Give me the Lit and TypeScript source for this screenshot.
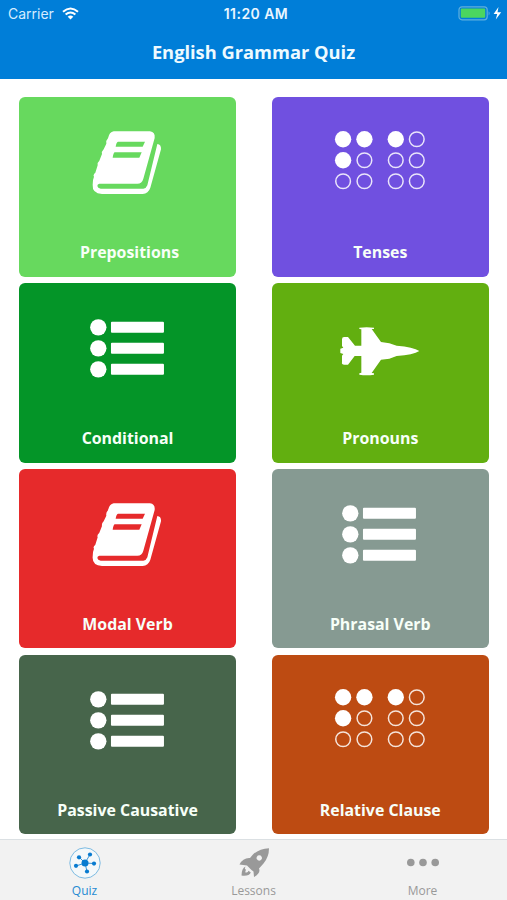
import { LitElement, html, svg, css } from "lit";
import { customElement } from "lit/decorators.js";
import { styleMap } from "lit/directives/style-map.js";

type IconName = "book" | "braille" | "list" | "jet";

const braille = [
  [54, 58, 1], [118, 58, 1], [212, 58, 1], [275, 58, 0],
  [54, 121, 1], [118, 121, 0], [212, 121, 0], [275, 121, 0],
  [54, 184, 0], [118, 184, 0], [212, 184, 0], [275, 184, 0],
];

const icons = {
  book: svg`<g transform="translate(2 5) scale(.33333)">
    <path fill="#fff" fill-rule="evenodd" d="M101 34H210Q226 36 224 54L190 176Q186 191 172 191H58Q52 192 52 198Q53 205 62 206H190Q199 205 202 196L232 72Q244 73 243 88L211 203Q205 221 188 222H66Q36 220 38 194Q38 178 42 170Q38 165 46 158L53 136Q50 129 58 122L66 102Q64 95 71 88L79 71Q77 62 84 55Q88 36 101 34ZM114 65Q109 67 107 80H188L195 65ZM104 97Q100 99 98 113H178L185 97Z"/></g>`,
  braille: svg`<g transform="translate(-4.9 4.9) scale(.33333)">${braille.map(([x, y, on]) =>
    on ? svg`<circle cx=${x} cy=${y} r="24.5" fill="#fff"/>`
       : svg`<circle cx=${x} cy=${y} r="22" fill="none" stroke="#fff" stroke-opacity=".85" stroke-width="4.5"/>`)}</g>`,
  list: svg`<g transform="translate(2.3 8.7) scale(.33333)" fill="#fff">${[53, 116, 179].map((y) =>
    svg`<circle cx="54" cy=${y} r="24.5"/><rect x="92" y=${y - 16.5} width="159" height="33" rx="3"/>`)}</g>`,
  jet: svg`<g transform="translate(0 14) scale(.33333)">
    <path fill="#fff" d="M88 38Q110 35 132 38V42H125L153 81L178 85L200 92Q250 96 268 108Q250 120 200 123L178 131L153 134L125 174L132 175V179Q110 182 88 179V175L94 173V123H74L54 149H43Q34 149 36 141V122L40 117L31 114V101L40 98L36 93V73Q36 65 44 66H54L75 92H94V43L88 42Z"/></g>`,
};

const topics: { name: string; icon: IconName; color: string; shift?: number }[] = [
  { name: "Prepositions", icon: "book", color: "#67d95e", shift: 2 },
  { name: "Tenses", icon: "braille", color: "#7050e0" },
  { name: "Conditional", icon: "list", color: "#049528" },
  { name: "Pronouns", icon: "jet", color: "#62af10" },
  { name: "Modal Verb", icon: "book", color: "#e62a2b" },
  { name: "Phrasal Verb", icon: "list", color: "#869a92" },
  { name: "Passive Causative", icon: "list", color: "#47654b" },
  { name: "Relative Clause", icon: "braille", color: "#bd4b12" },
];

@customElement("app-root")
export class AppRoot extends LitElement {
  static styles = css`
    :host { display: flex; flex-direction: column; height: 900px; background: #fff; font-family: "Open Sans", "Noto Sans", sans-serif; overflow: hidden; }
    * { box-sizing: border-box; }
    svg { display: block; }
    header { height: 79px; flex: none; background: #007ed8; color: #fff; }
    .status { height: 27px; display: grid; grid-template-columns: 1fr auto 1fr; align-items: center; padding: 0 5px 0 8px; font: 14px/27px Inter, sans-serif; }
    .carrier { display: flex; align-items: center; gap: 7px; color: #d5ecff; }
    .carrier svg { margin-left: 1px; }
    .time { font-weight: 600; font-size: 14px; letter-spacing: .45px; color: #eaf6ff; padding-left: 2px; }
    .battery { display: flex; justify-content: flex-end; }
    h1 { margin: 0; font-size: 18.3px; line-height: 50px; font-weight: 700; text-align: center; color: #eefaff; }
    main { flex: 1; padding: 18.3px 18.5px 0 19.3px; display: grid; grid-template-columns: 216.5px 216.5px; justify-content: space-between; grid-auto-rows: 179.5px; row-gap: 6.3px; align-content: start; }
    .card { border-radius: 6px; padding-top: 18px; display: flex; flex-direction: column; align-items: center; }
    .name { margin-top: 33px; font-size: 15.9px; line-height: 28px; font-weight: 700; color: #f7fff8; white-space: nowrap; }
    nav { height: 61px; flex: none; background: #f2f2f2; border-top: 1px solid #dbe0e3; display: grid; grid-template-columns: repeat(3, 1fr); }
    .tab { display: flex; flex-direction: column; align-items: center; padding-top: 6px; font-size: 12px; line-height: 18px; color: #999; }
    .tab svg { margin-bottom: 2px; }
    .active { color: #258bd2; }
  `;

  render() {
    return html`
      <header>
        <div class="status">
          <div class="carrier"><span>Carrier</span>
            <svg width="17" height="13" viewBox="0 0 17 13" fill="none" stroke="#fff" stroke-width="2"><path d="M1 4.8Q8.5-1.8 16 4.8M3.6 7.6Q8.5 3.4 13.4 7.6"/><path d="M5.7 9.7Q8.5 7.4 11.3 9.7L8.5 12.5Z" fill="#fff" stroke="none"/></svg>
          </div>
          <span class="time">11:20 AM</span>
          <div class="battery"><svg width="44" height="15" viewBox="0 0 44 15"><rect x="1" y=".8" width="28.2" height="13" rx="3" fill="none" stroke="#5fb0dd" stroke-width="1.2"/><rect x="2.8" y="2.6" width="24.4" height="9.2" rx="1" fill="#4bd65f"/><path d="M30.6 5.2Q32.6 7.3 30.6 9.4Z" fill="#5fb0dd"/><path d="M40.5 1L35.6 8H39.2L37.8 13.6L43.2 6.2H39.5Z" fill="#fff"/></svg></div>
        </div>
        <h1>English Grammar Quiz</h1>
      </header>
      <main>
        ${topics.map((t) => html`<section class="card" style=${styleMap({ background: t.color })}>
          <svg width="100" height="90" viewBox="0 0 100 90">${icons[t.icon]}</svg>
          <span class="name" style=${styleMap({ paddingLeft: `${(t.shift ?? 0) * 2}px` })}>${t.name}</span>
        </section>`)}
      </main>
      <nav>
        <div class="tab active">
          <svg width="34" height="34" viewBox="0 0 34 34"><circle cx="17" cy="17" r="15.2" fill="#f4f8fa" stroke="#7dbbe2"/><g stroke="#3a96d8" stroke-width="1"><path d="M17 17L11 11M17 17L22 8.5M17 17L26 17.5M17 17L8 20M17 17L19 25.5"/></g><g fill="#087bd0"><circle cx="17" cy="17" r="3.5"/><circle cx="11" cy="11.3" r="2.1"/><circle cx="22" cy="8.5" r="2.1"/><circle cx="26" cy="17.6" r="2.1"/><circle cx="8" cy="19.8" r="2.1"/><circle cx="19" cy="25.5" r="2.1"/></g></svg>
          <span>Quiz</span>
        </div>
        <div class="tab">
          <svg width="34" height="34" viewBox="0 0 34 34"><path fill="#999" fill-rule="evenodd" d="M32 2.2Q32 11 26.5 17.5L22 22.5Q24 27 17 31L16.5 25.5L14.5 24L10 19.5L2.5 18.5Q6 11.5 13 12L15.5 9Q22 2.5 32 2.2ZM22.2 9.3a2.7 2.7 0 1 0 .1 0ZM8.5 20.5Q7 23.5 9 23.5L8.2 26.2Q11 27 11.5 24.8L13.8 26.5Q12 30.5 4.5 29.5Q4.500 22.500 8.500 20.500Z"/></svg>
          <span>Lessons</span>
        </div>
        <div class="tab">
          <svg width="34" height="34" viewBox="0 0 34 34" fill="#999"><circle cx="4.800" cy="16.500" r="3.800"/><circle cx="17" cy="16.500" r="3.800"/><circle cx="29.200" cy="16.500" r="3.800"/></svg>
          <span>More</span>
        </div>
      </nav>`;
  }
}
